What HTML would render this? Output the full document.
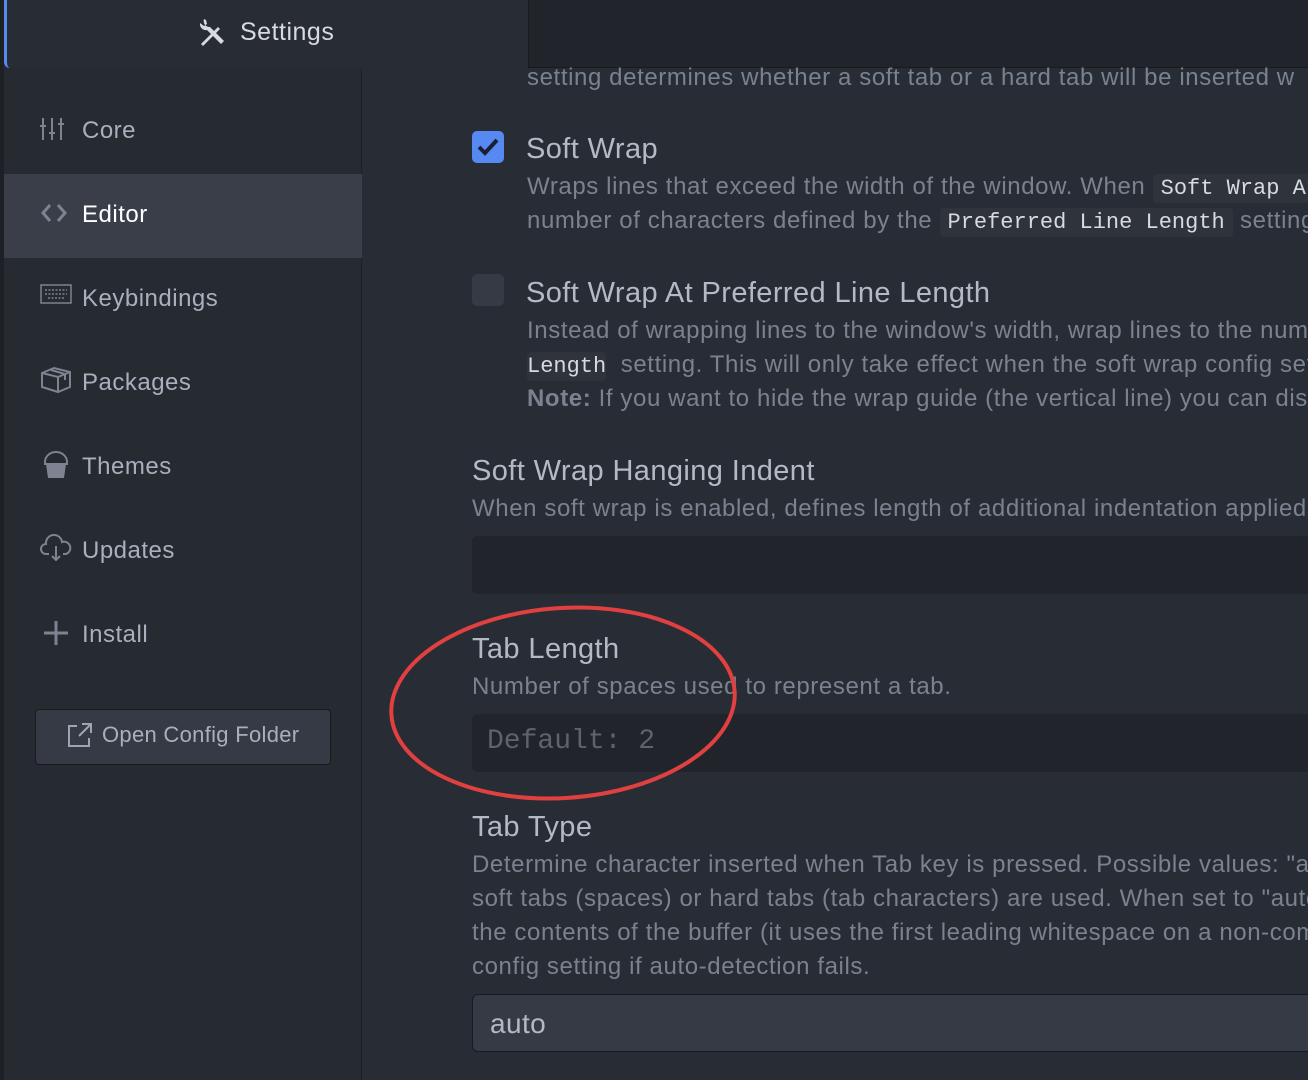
<!DOCTYPE html>
<html><head><meta charset="utf-8"><style>
*{margin:0;padding:0;box-sizing:border-box}
body{width:1308px;height:1080px;overflow:hidden;background:#282c34;font-family:"Liberation Sans",sans-serif;position:relative;color:#9da5b4}
.a{position:absolute;white-space:nowrap}
.tabbar{left:528px;top:0;width:780px;height:68px;background:#21252b;border-bottom:1px solid #181a1f;border-left:1px solid #181a1f}
.tab{left:4px;top:0;width:524px;height:68px;background:#282c34;border-left:3px solid #568af2;border-radius:0 0 0 6px}
.side{left:4px;top:68px;width:358px;height:1012px;background:#262a31;border-right:1px solid #1d2025}
.nav{left:82px;font-size:24px;letter-spacing:0.5px;color:#a9b0bd}
.ico{left:40px}
.desc{font-size:24px;color:#7b828f;letter-spacing:0.6px}
.title{font-size:29px;color:#b4bac5;letter-spacing:0.4px}
code{font-family:"Liberation Mono",monospace;background:#2f333c;color:#d7dae0;padding:2px 8px;border-radius:4px;font-size:22px;letter-spacing:0}
</style></head><body>
<div class="a" style="left:0;top:0;width:4px;height:1080px;background:#1d2025"></div>
<div class="a tabbar"></div>
<div class="a tab"></div>
<svg class="a" style="left:198px;top:16px" width="32" height="32" viewBox="0 0 32 32" fill="#d7dae0"><path d="M3 28 L20 11 L22 13 L5 30Z"/><path d="M6 3a6 6 0 0 0 6 8l14 14-3 3L9 14A6 6 0 0 1 2 7l4 3 3-2-1-4z" /></svg>
<div class="a" style="left:240px;top:18px;font-size:25px;letter-spacing:0.5px;color:#d7dae0">Settings</div>
<div class="a side"></div>
<div class="a" style="left:4px;top:174px;width:358px;height:84px;background:#3a3e48"></div>
<svg class="a ico" style="top:116px" width="30" height="26" stroke="#7d8390" stroke-width="2" fill="none"><path d="M3 2v22M12 2v22M21 2v22M0 10h6M9 17h6M18 8h6"/></svg>
<div class="a nav" style="top:117px">Core</div>
<svg class="a ico" style="top:202px" width="30" height="22" stroke="#7d8390" stroke-width="3" fill="none"><path d="M10 3 3 11l7 8M18 3l7 8-7 8"/></svg>
<div class="a nav" style="top:201px;color:#fff">Editor</div>
<svg class="a ico" style="top:284px" width="32" height="22" stroke="#7d8390" stroke-width="1.5" fill="none"><rect x="1" y="1" width="30" height="18"/><path d="M5 6h22M5 10h22M8 14h16" stroke-dasharray="2 1.5"/></svg>
<div class="a nav" style="top:285px">Keybindings</div>
<svg class="a ico" style="top:366px" width="32" height="28" stroke="#7d8390" stroke-width="2" fill="none"><path d="M2 7l12-5 16 4v15l-12 5-16-5zM2 7l16 4 12-5M18 11v15M11 4l14 4v6"/></svg>
<div class="a nav" style="top:369px">Packages</div>
<svg class="a ico" style="top:450px;left:43px" width="26" height="30" fill="#7d8390"><path d="M2 12a11 10 0 0 1 22 0v2H2z" fill="none" stroke="#7d8390" stroke-width="2"/><path d="M3 14h20l-2 14H5z"/></svg>
<div class="a nav" style="top:453px">Themes</div>
<svg class="a ico" style="top:534px" width="32" height="28" stroke="#7d8390" stroke-width="2" fill="none"><path d="M9 20H6a5 5 0 0 1 0-10 8 8 0 0 1 16-2 6 6 0 0 1 4 12h-3M16 12v14M12 22l4 4 4-4"/></svg>
<div class="a nav" style="top:537px">Updates</div>
<svg class="a ico" style="top:620px;left:43px" width="26" height="26" stroke="#7d8390" stroke-width="3"><path d="M13 1v24M1 13h24"/></svg>
<div class="a nav" style="top:621px">Install</div>
<div class="a" style="left:35px;top:709px;width:296px;height:56px;background:#353a44;border:1px solid #181a1f;border-radius:4px"></div>
<svg class="a" style="left:67px;top:722px" width="26" height="26" stroke="#9da5b4" stroke-width="2" fill="none"><path d="M10 4H2v20h20v-8M12 14L24 2M15 2h9v9"/></svg>
<div class="a" style="left:102px;top:722px;font-size:22px;letter-spacing:0.3px;color:#a9b0bd">Open Config Folder</div>

<div class="a desc" style="left:527px;top:64px">setting determines whether a soft tab or a hard tab will be inserted w</div>
<div class="a" style="left:472px;top:131px;width:32px;height:32px;background:#568af2;border-radius:5px"></div>
<svg class="a" style="left:476px;top:136px" width="24" height="22"><path d="M3 11l6 6L21 4" stroke="#1a1f33" stroke-width="4" fill="none"/></svg>
<div class="a title" style="left:526px;top:133px">Soft Wrap</div>
<div class="a desc" style="left:527px;top:173px">Wraps lines that exceed the width of the window. When <code>Soft Wrap At</code></div>
<div class="a desc" style="left:527px;top:207px">number of characters defined by the <code>Preferred Line Length</code> setting</div>
<div class="a" style="left:472px;top:274px;width:32px;height:32px;background:#363a44;border-radius:5px"></div>
<div class="a title" style="left:526px;top:277px">Soft Wrap At Preferred Line Length</div>
<div class="a desc" style="left:527px;top:317px">Instead of wrapping lines to the window's width, wrap lines to the number</div>
<div class="a desc" style="left:527px;top:351px"><code style="padding:2px 0">Length</code> &nbsp;setting. This will only take effect when the soft wrap config setting</div>
<div class="a desc" style="left:527px;top:385px"><b>Note:</b> If you want to hide the wrap guide (the vertical line) you can disable</div>
<div class="a title" style="left:472px;top:455px">Soft Wrap Hanging Indent</div>
<div class="a desc" style="left:472px;top:495px">When soft wrap is enabled, defines length of additional indentation applied</div>
<div class="a" style="left:472px;top:536px;width:840px;height:58px;background:#21252b;border-radius:5px 0 0 5px"></div>
<div class="a title" style="left:472px;top:633px">Tab Length</div>
<div class="a desc" style="left:472px;top:673px">Number of spaces used to represent a tab.</div>
<div class="a" style="left:472px;top:714px;width:840px;height:58px;background:#21252b;border-radius:5px 0 0 5px"></div>
<div class="a" style="left:487px;top:726px;font-family:'Liberation Mono',monospace;font-size:28px;color:#5c626e">Default: 2</div>
<svg class="a" style="left:385px;top:600px" width="360" height="210"><ellipse cx="178" cy="103" rx="172" ry="95" transform="rotate(-4 178 103)" stroke="#e0403f" stroke-width="4" fill="none"/></svg>
<div class="a title" style="left:472px;top:811px">Tab Type</div>
<div class="a desc" style="left:472px;top:851px">Determine character inserted when Tab key is pressed. Possible values: "auto"</div>
<div class="a desc" style="left:472px;top:885px">soft tabs (spaces) or hard tabs (tab characters) are used. When set to "auto"</div>
<div class="a desc" style="left:472px;top:919px">the contents of the buffer (it uses the first leading whitespace on a non-comm</div>
<div class="a desc" style="left:472px;top:953px">config setting if auto-detection fails.</div>
<div class="a" style="left:472px;top:994px;width:840px;height:58px;background:#353a44;border:1px solid #181a1f;border-radius:6px 0 0 6px"></div>
<div class="a" style="left:490px;top:1008px;font-size:28px;letter-spacing:0.4px;color:#b4bac5">auto</div>
</body></html>
